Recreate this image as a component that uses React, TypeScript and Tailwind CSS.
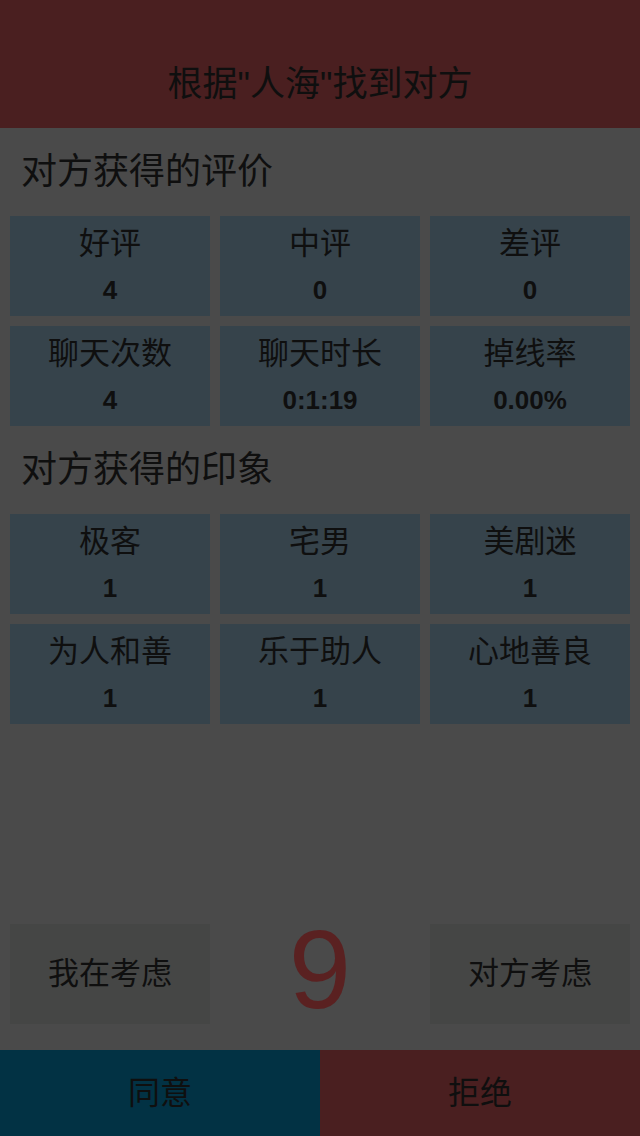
const font = "font-['Liberation_Sans','Noto_Sans_CJK_SC',sans-serif]";

const ratings = [
  { label: "好评", value: "4" },
  { label: "中评", value: "0" },
  { label: "差评", value: "0" },
  { label: "聊天次数", value: "4" },
  { label: "聊天时长", value: "0:1:19" },
  { label: "掉线率", value: "0.00%" },
];

const impressions = [
  { label: "极客", value: "1" },
  { label: "宅男", value: "1" },
  { label: "美剧迷", value: "1" },
  { label: "为人和善", value: "1" },
  { label: "乐于助人", value: "1" },
  { label: "心地善良", value: "1" },
];

function StatGrid({ items }: { items: { label: string; value: string }[] }) {
  return (
    <div className="grid grid-cols-3 gap-[10px] px-[10px]">
      {items.map((it) => (
        <div
          key={it.label}
          className="h-[100px] bg-[#36434b] flex flex-col items-center pt-[10px]"
        >
          <span className="text-[31px] leading-[36px]">{it.label}</span>
          <span className="text-[26px] leading-[32px] font-bold mt-[12px]">{it.value}</span>
        </div>
      ))}
    </div>
  );
}

function SectionTitle({ children }: { children: string }) {
  return (
    <div className="h-[88px] flex items-center px-[21px] text-[36px] leading-[44px]">
      {children}
    </div>
  );
}

export default function App() {
  return (
    <div className={`${font} w-[640px] h-[1136px] bg-[#4a4a4a] text-[#0f0f0f] flex flex-col`}>
      <div className="h-[128px] bg-[#4a1f20] flex justify-center pt-[62px]">
        <span className="text-[35px] leading-[44px]">根据"人海"找到对方</span>
      </div>

      <SectionTitle>对方获得的评价</SectionTitle>
      <StatGrid items={ratings} />

      <SectionTitle>对方获得的印象</SectionTitle>
      <StatGrid items={impressions} />

      <div className="flex-1" />

      <div className="grid grid-cols-3 gap-[10px] px-[10px] mb-[26px]">
        <div className="h-[100px] bg-[#454645] flex items-center justify-center text-[31px]">
          我在考虑
        </div>
        <div className="h-[100px] flex items-center justify-center text-[112px] leading-none text-[#5a2121] pb-[8px]">
          9
        </div>
        <div className="h-[100px] bg-[#454645] flex items-center justify-center text-[31px]">
          对方考虑
        </div>
      </div>

      <div className="h-[86px] flex text-[32px]">
        <button className="flex-1 bg-[#023244] flex items-center justify-center">同意</button>
        <button className="flex-1 bg-[#4a1f20] flex items-center justify-center">拒绝</button>
      </div>
    </div>
  );
}
